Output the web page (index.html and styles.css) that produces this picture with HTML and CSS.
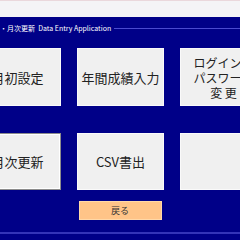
FILE: index.html
```html
<!DOCTYPE html>
<html lang="ja">
<head>
    <meta charset="UTF-8">
    <meta name="viewport" content="width=device-width, initial-scale=1.0">
    <title>月次更新</title>
    <link rel="stylesheet" href="styles.css">
</head>
<body>
    <div class="topbar"></div>
    <div class="panel">
        <div class="legend">
            <span class="legend-text">・月次更新&nbsp; Data Entry Application</span>
            <span class="legend-line"></span>
        </div>
        <div class="menu">
            <button class="menu-btn">月初設定</button>
            <button class="menu-btn">年間成績入力</button>
            <button class="menu-btn small">ログインID<br>パスワード<br>変 更</button>
            <button class="menu-btn focused">月次更新</button>
            <button class="menu-btn">CSV書出</button>
            <button class="menu-btn"></button>
        </div>
        <div class="footer">
            <button class="back-btn">戻る</button>
        </div>
        <div class="bottom-line"></div>
    </div>
</body>
</html>
```

FILE: styles.css
```css
html, body {
    margin: 0;
    padding: 0;
    width: 240px;
    height: 240px;
    overflow: hidden;
    font-family: "Noto Sans CJK JP", "Liberation Sans", sans-serif;
}
.topbar {
    height: 17px;
    background-color: #f4f4f6;
    border-top: 1px solid #ead8dc;
    box-sizing: border-box;
}
.panel {
    height: 223px;
    background-color: #000088;
    overflow: hidden;
}
.legend {
    display: flex;
    align-items: center;
    height: 12px;
    padding-top: 5px;
}
.legend-text {
    color: #ffffff;
    font-size: 7px;
    white-space: nowrap;
    padding-right: 3px;
}
.legend-line {
    flex: 1;
    border-top: 1px solid #4a4ad0;
}
.menu {
    display: grid;
    grid-template-columns: 87px 87px 87px;
    grid-template-rows: 58px 57px;
    column-gap: 16px;
    row-gap: 27px;
    margin-top: 14px;
    margin-left: -26px;
}
.menu-btn {
    background-color: #f0f0f0;
    border: 1px solid #fafafa;
    color: #222222;
    font-family: inherit;
    font-size: 13px;
    padding: 0;
    white-space: nowrap;
    overflow: hidden;
}
.menu-btn.small {
    font-size: 12px;
    line-height: 15px;
}
.menu-btn.focused {
    border: 1px solid #8c8c8c;
    box-shadow: inset 0 0 0 1px #ffffff;
}
.footer {
    display: flex;
    justify-content: center;
    margin-top: 11px;
}
.back-btn {
    width: 83px;
    height: 19px;
    background-color: #ffc488;
    border: 1px solid #ffd8a8;
    color: #333333;
    font-family: inherit;
    font-size: 9px;
    padding: 0;
}
.bottom-line {
    margin-top: 12px;
    border-top: 2px solid #3434b8;
}
```
